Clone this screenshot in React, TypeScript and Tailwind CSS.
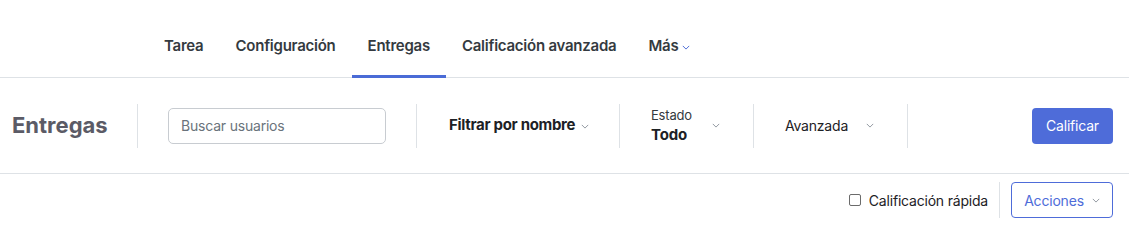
import React from 'react';

function Chevron({ className }: { className?: string }) {
  return (
    <svg viewBox="0 0 10 6" className={className} fill="none" stroke="currentColor" strokeWidth="1.2">
      <path d="M1 1l4 4 4-4" />
    </svg>
  );
}

const tabs = ['Tarea', 'Configuración', 'Entregas', 'Calificación avanzada'];

export default function App() {
  return (
    <div className="w-[1129px] h-[228px] bg-white text-[#1d2125]" style={{ fontFamily: 'Inter, "Liberation Sans", sans-serif' }}>
      {/* Tabs */}
      <div className="h-[78px] border-b border-[#dee2e6] pl-[148px] flex">
        {tabs.map((t) => (
          <div
            key={t}
            className={
              'px-4 h-[78px] flex items-center pt-[14px] text-[15px] font-semibold text-[#343a40] tracking-[-0.24px] ' +
              (t === 'Entregas' ? 'border-b-[3px] border-[#4a6bd6] pt-[17px]' : '')
            }
          >
            {t}
          </div>
        ))}
        <div className="px-4 h-[78px] pt-[14px] flex items-center gap-1 text-[15px] font-semibold text-[#343a40] tracking-[-0.24px]">
          Más
          <Chevron className="w-[8px] h-[5px] text-[#4a6bd6] mt-[2px]" />
        </div>
      </div>

      {/* Toolbar */}
      <div className="h-[96px] border-b border-[#dee2e6] flex items-center pl-3 pr-4">
        <div className="text-[22px] font-bold text-[#5b5b66] w-[125px]">Entregas</div>
        <div className="w-px h-[44px] bg-[#dee2e6]" />
        <div className="px-[30px]">
          <div className="w-[218px] h-[36px] border border-[#c8ccd1] rounded-[5px] flex items-center px-3 text-[14px] text-[#6a737b] tracking-[-0.2px]">
            Buscar usuarios
          </div>
        </div>
        <div className="w-px h-[44px] bg-[#dee2e6]" />
        <div className="w-[202px] flex items-center pl-[32px] gap-[6px] text-[15px] font-bold text-[#1d2125] tracking-[-0.3px]">
          Filtrar por nombre
          <Chevron className="w-[8px] h-[5px] text-[#8f959e] mt-[1px]" />
        </div>
        <div className="w-px h-[44px] bg-[#dee2e6]" />
        <div className="w-[133px] flex items-center pl-[31px]">
          <div className="flex flex-col w-[61px]">
            <span className="text-[13px] leading-[18px] text-[#343a40] tracking-[-0.2px]">Estado</span>
            <span className="text-[15px] leading-[22px] font-bold text-[#1d2125] tracking-[-0.2px]">Todo</span>
          </div>
          <Chevron className="w-[8px] h-[5px] text-[#8f959e]" />
        </div>
        <div className="w-px h-[44px] bg-[#dee2e6]" />
        <div className="w-[153px] flex items-center pl-[31px] text-[14px] text-[#1d2125] tracking-[-0.2px]">
          <span className="w-[81px]">Avanzada</span>
          <Chevron className="w-[8px] h-[5px] text-[#8f959e]" />
        </div>
        <div className="w-px h-[44px] bg-[#dee2e6]" />
        <div className="flex-1" />
        <button className="w-[81px] h-[36px] rounded-[4px] bg-[#4e6cd9] text-white text-[14px] tracking-[-0.2px]">
          Calificar
        </button>
      </div>

      {/* Bottom row */}
      <div className="flex items-center justify-end pr-4 pt-2">
        <label className="flex items-center gap-[8px] text-[14px] text-[#1d2125] tracking-[-0.2px]">
          <span className="w-[12px] h-[12px] border border-[#6b6b6b] rounded-[2px] bg-white" />
          Calificación rápida
        </label>
        <div className="w-px h-[36px] bg-[#dee2e6] mx-[11px]" />
        <button className="w-[102px] h-[36px] border border-[#4e6cd9] rounded-[4px] flex items-center justify-center gap-[8px] text-[14px] text-[#4e6cd9] tracking-[-0.2px]">
          Acciones
          <Chevron className="w-[8px] h-[5px] text-[#8f959e]" />
        </button>
      </div>
    </div>
  );
}
